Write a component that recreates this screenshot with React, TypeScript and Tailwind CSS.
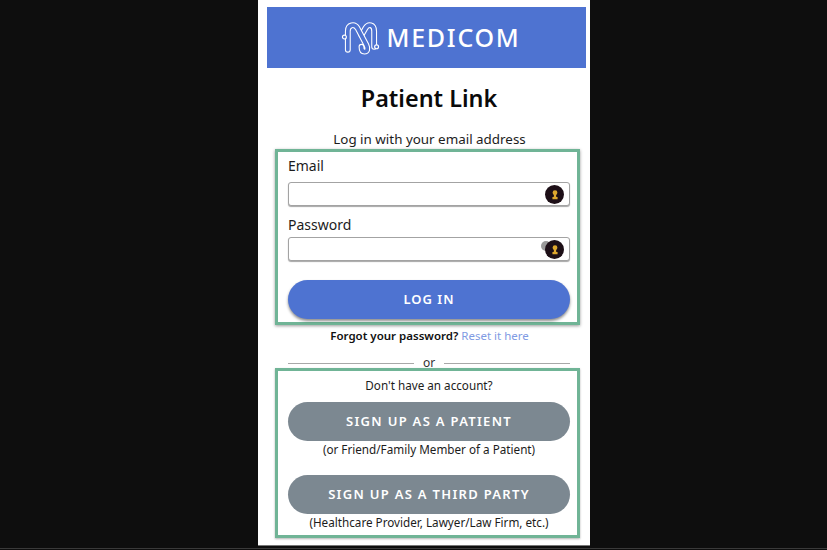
function Key({ shade }: { shade?: boolean }) {
  return (
    <span className="absolute right-[5px] top-[2px] flex h-[19px] w-[19px] items-center justify-center">
      {shade && <span className="absolute left-[-4px] top-[1px] h-[10px] w-[10px] rounded-full bg-[#9a9a9a]" />}
      <span className="absolute inset-0 rounded-full bg-[#1d0f17]" />
      <svg viewBox="0 0 10 12" className="relative h-[10px] w-[8px]">
        <circle cx="5" cy="3.2" r="3" fill="#dfa82e" />
        <path d="M3.9 4 L3.4 8.5 H1.8 V11.2 H8.2 V8.5 H6.6 L6.1 4 Z" fill="#dfa82e" />
      </svg>
    </span>
  );
}
function Field({ shade }: { shade?: boolean }) {
  return (
    <div className="relative h-[24px] rounded-[3px] border border-[#a3a3a3] bg-white shadow-[0_1px_1px_rgba(0,0,0,0.35)]">
      <Key shade={shade} />
    </div>
  );
}
const tubes = [
  "M21 14 L25 7 C28 2 34 3 34 10 V26",
  "M7 29 V10 C7 3 14 2 17 7 L26 24 C28 28 27 31 24 31 C21 31 21 28 21 26",
];
export default function App() {
  return (
    <div className="h-[550px] w-[827px] overflow-hidden bg-[#0e0e0e] font-['Noto_Sans',sans-serif]">
      <div className="h-[549px] border-b border-[#3a3a3a] pl-[258px]">
        <div className="h-[546px] w-[332px] border-b border-[#777] bg-white pl-[9px] pr-[4px] pt-[7px] text-[#1c1c1c]">
          <div className="flex h-[61px] items-center justify-center gap-[7px] bg-[#4e73d1] pl-[8px]">
            <svg viewBox="0 0 40 34" className="h-[34px] w-[39px]" fill="none" strokeLinecap="round" strokeLinejoin="round">
              {tubes.map((d) => (
                <g key={d}>
                  <path d={d} stroke="#fff" strokeWidth="6" />
                  <path d={d} stroke="#4e73d1" strokeWidth="3.8" />
                </g>
              ))}
              <circle cx="3.5" cy="16" r="2" fill="#4e73d1" stroke="#fff" strokeWidth="1.2" />
              <circle cx="36.5" cy="26" r="2" fill="#4e73d1" stroke="#fff" strokeWidth="1.2" />
            </svg>
            <span className="text-[25px] font-medium leading-none tracking-[1.7px] text-white">MEDICOM</span>
          </div>
          <h1 className="mt-[14px] pl-[5px] text-center text-[23.4px] leading-[32px] font-semibold text-[#0a0a0a]">Patient Link</h1>
          <p className="mt-[16px] pl-[6px] text-center text-[13.4px] leading-[18px]">Log in with your email address</p>
          <div className="ml-[8px] mr-[6px] mt-[1px] h-[176px] border-[3px] border-[#70b496] pl-[10px] pr-[7px] shadow-[0_1px_3px_rgba(0,0,0,0.4)]">
            <div className="pt-[4px] text-[14px] leading-[20px]">Email</div>
            <div className="mt-[6px]"><Field /></div>
            <div className="mt-[9px] text-[14px] leading-[20px]">Password</div>
            <div className="mt-[2px]"><Field shade /></div>
            <button className="mt-[19px] flex h-[39px] w-full items-center justify-center rounded-full bg-[#4e73d1] text-[13px] font-semibold tracking-[1px] text-white shadow-[0_2px_3px_rgba(0,0,0,0.45)]">LOG IN</button>
          </div>
          <p className="mt-[2px] pl-[6px] text-center text-[11.5px] leading-[17px]">
            <span className="font-semibold text-[#111]">Forgot your password?</span>{" "}
            <span className="text-[#7f9be3]">Reset it here</span>
          </p>
          <div className="ml-[21px] mr-[16px] mt-[11px] flex items-center gap-[9px] text-[12px] leading-[16px] text-[#333]">
            <span className="h-px flex-1 bg-[#a8a8a8]" />
            <span>or</span>
            <span className="h-px flex-1 bg-[#a8a8a8]" />
          </div>
          <div className="ml-[8px] mr-[6px] mt-[-3px] h-[170px] border-[3px] border-[#70b496] pl-[10px] pr-[7px] text-center text-[11.7px] leading-[17px] shadow-[0_1px_2px_rgba(0,0,0,0.3)]">
            <p className="pt-[6px]">Don't have an account?</p>
            <button className="mt-[8px] flex h-[39px] w-full items-center justify-center rounded-full bg-[#7c8891] text-[13px] font-semibold tracking-[1.3px] text-white">SIGN UP AS A PATIENT</button>
            <p>(or Friend/Family Member of a Patient)</p>
            <button className="mt-[17px] flex h-[39px] w-full items-center justify-center rounded-full bg-[#7c8891] text-[13px] font-semibold tracking-[1.3px] text-white">SIGN UP AS A THIRD PARTY</button>
            <p>(Healthcare Provider, Lawyer/Law Firm, etc.)</p>
          </div>
        </div>
      </div>
    </div>
  );
}
